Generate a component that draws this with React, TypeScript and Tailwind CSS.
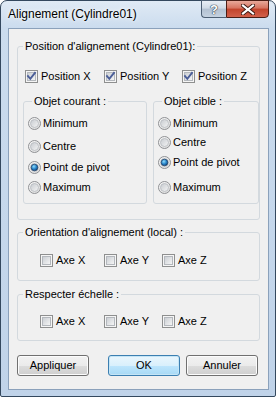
import React from 'react';

const font = { fontFamily: '"Liberation Sans", Arial, sans-serif' };

const CheckBox: React.FC<{ checked?: boolean }> = ({ checked }) => (
  <svg width="13" height="13" viewBox="0 0 13 13" className="shrink-0">
    <defs>
      <linearGradient id="cbInner" x1="0" y1="0" x2="1" y2="1">
        <stop offset="0" stopColor="#c9cdd2" />
        <stop offset="1" stopColor="#f7f7f7" />
      </linearGradient>
    </defs>
    <rect x="0.5" y="0.5" width="12" height="12" fill="#f5f5f5" stroke="#8e8f8f" />
    <rect x="2.5" y="2.5" width="8" height="8" fill="url(#cbInner)" stroke="#b4b8bd" />
    {checked && (
      <path d="M3 6.2 L5.3 8.8 L10 2.8" fill="none" stroke="#4b5e98" strokeWidth="1.9" strokeLinecap="square" />
    )}
  </svg>
);

const Radio: React.FC<{ checked?: boolean }> = ({ checked }) => (
  <svg width="13" height="13" viewBox="0 0 13 13" className="shrink-0">
    <defs>
      <linearGradient id="rdOuter" x1="0" y1="0" x2="1" y2="1">
        <stop offset="0" stopColor="#fbfbfb" />
        <stop offset="1" stopColor="#d8d8d8" />
      </linearGradient>
      <linearGradient id="rdInner" x1="0" y1="0" x2="1" y2="1">
        <stop offset="0" stopColor="#c6cacf" />
        <stop offset="1" stopColor="#f5f5f5" />
      </linearGradient>
      <radialGradient id="rdDot" cx="0.4" cy="0.35" r="0.7">
        <stop offset="0" stopColor="#8fdcfb" />
        <stop offset="0.55" stopColor="#2783c9" />
        <stop offset="1" stopColor="#0f3f73" />
      </radialGradient>
    </defs>
    <circle cx="6.5" cy="6.5" r="6" fill="url(#rdOuter)" stroke="#8f9194" />
    <circle cx="6.5" cy="6.5" r="4" fill="url(#rdInner)" stroke="#b5b9be" strokeWidth="0.8" />
    {checked && <circle cx="6.5" cy="6.5" r="3.3" fill="url(#rdDot)" stroke="#1d3e64" strokeWidth="0.7" />}
  </svg>
);

const Check: React.FC<{ label: string; checked?: boolean; className?: string }> = ({ label, checked, className }) => (
  <div className={`flex items-center gap-[3px] h-[13px] ${className ?? ''}`}>
    <CheckBox checked={checked} />
    <span className="leading-[13px]">{label}</span>
  </div>
);

const RadioRow: React.FC<{ label: string; checked?: boolean; className?: string }> = ({ label, checked, className }) => (
  <div className={`flex items-center gap-[2px] h-[13px] ${className ?? ''}`}>
    <Radio checked={checked} />
    <span className="leading-[13px]">{label}</span>
  </div>
);

const Btn: React.FC<{ label: string; primary?: boolean; className?: string }> = ({ label, primary, className }) => (
  <div
    className={`w-[72px] h-[21px] rounded-[3px] border flex items-center justify-center leading-[13px] ${
      primary
        ? 'border-[#3c7fb1] bg-[linear-gradient(#eaf6fd_0%,#d9f0fc_50%,#bee6fd_50%,#a7d9f5_100%)] shadow-[inset_0_0_0_1px_#c4e5f6]'
        : 'border-[#707070] bg-[linear-gradient(#f2f2f2_0%,#ebebeb_50%,#dddddd_50%,#cfcfcf_100%)] shadow-[inset_0_0_0_1px_#fcfcfc]'
    } ${className ?? ''}`}
  >
    {label}
  </div>
);

export default function App() {
  return (
    <div className="w-[276px] h-[397px] text-[11px] text-black" style={font}>
      <div className="w-full h-full flex flex-col rounded-t-[7px] rounded-b-[2px] border border-[#34485e] bg-[linear-gradient(180deg,#e0eaf5_0px,#cbdcee_27px,#c0d3e9_100%)]">
        {/* title bar */}
        <div className="h-[27px] flex items-start shrink-0">
          <div
            className="pl-[7px] pt-[6px] text-[12px] leading-[15px] text-black [text-shadow:0_0_6px_#ffffff,0_0_3px_#ffffff]"
            style={{ fontFamily: '"Liberation Sans", Arial, sans-serif' }}
          >
            Alignement (Cylindre01)
          </div>
          <div className="ml-auto mr-[6px] -mt-px flex">
            <div className="w-[25px] h-[18px] rounded-bl-[4px] border border-[#4d5f73] border-r-0 bg-[linear-gradient(#e8eef5_0%,#d0dae5_45%,#b3c1d1_50%,#c5d2e0_100%)] flex items-center justify-center">
              <span className="text-white font-bold text-[13px] leading-none [text-shadow:0_0_1px_#2a3a4c,0_0_1px_#2a3a4c,0_0_1px_#2a3a4c]">?</span>
            </div>
            <div className="w-[43px] h-[18px] rounded-br-[4px] border border-[#4b1d14] bg-[linear-gradient(#e8a99a_0%,#d6735f_45%,#c2432b_50%,#d2604a_100%)] flex items-center justify-center">
              <svg width="14" height="11" viewBox="0 0 14 11">
                <path d="M2 1.5 L12 9.5 M12 1.5 L2 9.5" stroke="#3b1710" strokeWidth="4" strokeLinecap="square" />
                <path d="M2 1.5 L12 9.5 M12 1.5 L2 9.5" stroke="#ffffff" strokeWidth="2.2" strokeLinecap="square" />
              </svg>
            </div>
          </div>
        </div>

        {/* client area */}
        <div className="flex-1 ml-[7px] mr-[6px] mb-[6px] border border-[#8ba1bb] bg-[#f0f0f0] px-[8px] pt-[11px] flex flex-col">
          <fieldset className="border border-[#d3d9de] rounded-[3px] px-0 pb-[15px]">
            <legend className="ml-[5px] px-[2px] leading-[13px]">Position d'alignement (Cylindre01):</legend>
            <div className="flex pl-[7px] pt-[17px]">
              <Check label="Position X" checked className="w-[79px]" />
              <Check label="Position Y" checked className="w-[78px]" />
              <Check label="Position Z" checked />
            </div>
            <div className="flex ml-[5px] mt-[12px] gap-[6px]">
              <fieldset className="w-[124px] border border-[#d3d9de] rounded-[3px] pl-[4px] pt-[9px] pb-[9px]">
                <legend className="ml-[4px] px-[2px] leading-[13px]">Objet courant :</legend>
                <RadioRow label="Minimum" />
                <RadioRow label="Centre" className="mt-[10px]" />
                <RadioRow label="Point de pivot" checked className="mt-[8px]" />
                <RadioRow label="Maximum" className="mt-[7px]" />
              </fieldset>
              <fieldset className="w-[106px] border border-[#d3d9de] rounded-[3px] pl-[4px] pt-[9px] pb-[9px]">
                <legend className="ml-[4px] px-[2px] leading-[13px]">Objet cible :</legend>
                <RadioRow label="Minimum" />
                <RadioRow label="Centre" className="mt-[6px]" />
                <RadioRow label="Point de pivot" checked className="mt-[7px]" />
                <RadioRow label="Maximum" className="mt-[12px]" />
              </fieldset>
            </div>
          </fieldset>

          <fieldset className="mt-[6px] border border-[#d3d9de] rounded-[3px] pb-[13px]">
            <legend className="ml-[5px] px-[2px] leading-[13px]">Orientation d'alignement (local) :</legend>
            <div className="flex pl-[22px] pt-[15px]">
              <Check label="Axe X" className="w-[64px]" />
              <Check label="Axe Y" className="w-[58px]" />
              <Check label="Axe Z" />
            </div>
          </fieldset>

          <fieldset className="mt-[7px] border border-[#d3d9de] rounded-[3px] pb-[12px]">
            <legend className="ml-[5px] px-[2px] leading-[13px]">Respecter échelle :</legend>
            <div className="flex pl-[22px] pt-[14px]">
              <Check label="Axe X" className="w-[64px]" />
              <Check label="Axe Y" className="w-[58px]" />
              <Check label="Axe Z" />
            </div>
          </fieldset>

          <div className="flex mt-[14px]">
            <Btn label="Appliquer" />
            <Btn label="OK" primary className="ml-[19px]" />
            <Btn label="Annuler" className="ml-[6px]" />
          </div>
        </div>
      </div>
    </div>
  );
}
